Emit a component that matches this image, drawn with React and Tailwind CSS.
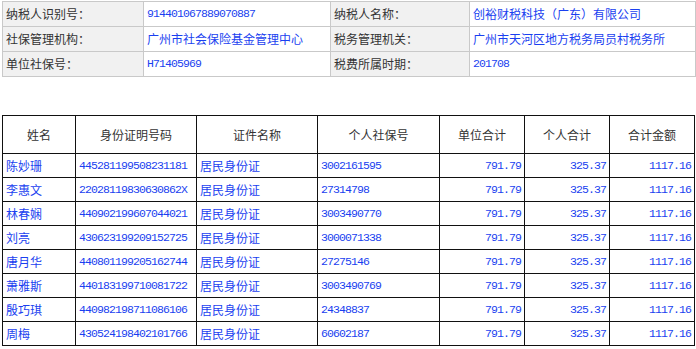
const info = [
  ['纳税人识别号：', '914401067889070887', '纳税人名称：', '创裕财税科技（广东）有限公司'],
  ['社保管理机构：', '广州市社会保险基金管理中心', '税务管理机关：', '广州市天河区地方税务局员村税务所'],
  ['单位社保号：', 'H71405969', '税费所属时期：', '201708'],
];

const people = [
  ['陈妙珊', '445281199508231181', '3002161595'],
  ['李惠文', '22028119830630862X', '27314798'],
  ['林春娴', '440902199607044021', '3003490770'],
  ['刘亮', '430623199209152725', '3000071338'],
  ['唐月华', '440801199205162744', '27275146'],
  ['萧雅斯', '440183199710081722', '3003490769'],
  ['殷巧琪', '440982198711086106', '24348837'],
  ['周梅', '430524198402101766', '60602187'],
];

const cjk = "font-['Noto_Sans_CJK_SC',sans-serif]";
const mono = "font-['Liberation_Mono','Noto_Sans_CJK_SC',monospace] text-[11.5px] tracking-[-0.9px]";
const isAscii = (s) => /^[\x00-\x7f]+$/.test(s);

function InfoTable() {
  return (
    <table className="ml-[2px] mt-[1px] w-[693px] border-collapse table-fixed">
      <colgroup>
        <col className="w-[141px]" />
        <col className="w-[187px]" />
        <col className="w-[139px]" />
        <col className="w-[226px]" />
      </colgroup>
      <tbody>
        {info.map((r, i) => (
          <tr key={i} className="h-[25px]">
            <td className={`border border-[#c9c9c9] bg-[#f1f1f1] pl-[3px] text-[12px] text-[#333] ${cjk}`}>{r[0]}</td>
            <td className={`border border-[#c9c9c9] bg-white pl-[3px] text-[#1a3ff0] ${isAscii(r[1]) ? mono : `text-[12px] ${cjk}`}`}>{r[1]}</td>
            <td className={`border border-[#c9c9c9] bg-[#f1f1f1] pl-[3px] text-[12px] text-[#333] ${cjk}`}>{r[2]}</td>
            <td className={`border border-[#c9c9c9] bg-white pl-[3px] text-[#1a3ff0] ${isAscii(r[3]) ? mono : `text-[12px] ${cjk}`}`}>{r[3]}</td>
          </tr>
        ))}
      </tbody>
    </table>
  );
}

function PayTable() {
  const heads = ['姓名', '身份证明号码', '证件名称', '个人社保号', '单位合计', '个人合计', '合计金额'];
  const cell = 'border border-[#111] px-[3px] text-[#1a3ff0]';
  return (
    <table className="ml-[2px] mt-[38px] w-[693px] border-collapse table-fixed">
      <colgroup>
        <col className="w-[73px]" />
        <col className="w-[121px]" />
        <col className="w-[121px]" />
        <col className="w-[122px]" />
        <col className="w-[85px]" />
        <col className="w-[85px]" />
        <col className="w-[85px]" />
      </colgroup>
      <thead>
        <tr className="h-[38px]">
          {heads.map((h) => (
            <th key={h} className={`border border-[#111] text-center font-normal text-[12px] text-[#333] ${cjk}`}>{h}</th>
          ))}
        </tr>
      </thead>
      <tbody>
        {people.map((p) => (
          <tr key={p[1]} className="h-[24px]">
            <td className={`${cell} text-[12px] ${cjk}`}>{p[0]}</td>
            <td className={`${cell} ${mono}`}>{p[1]}</td>
            <td className={`${cell} text-[12px] ${cjk}`}>居民身份证</td>
            <td className={`${cell} ${mono}`}>{p[2]}</td>
            <td className={`${cell} ${mono} text-right`}>791.79</td>
            <td className={`${cell} ${mono} text-right`}>325.37</td>
            <td className={`${cell} ${mono} text-right`}>1117.16</td>
          </tr>
        ))}
      </tbody>
    </table>
  );
}

export default function App() {
  return (
    <div className="w-[696px] h-[349px] bg-white overflow-hidden">
      <InfoTable />
      <PayTable />
    </div>
  );
}
